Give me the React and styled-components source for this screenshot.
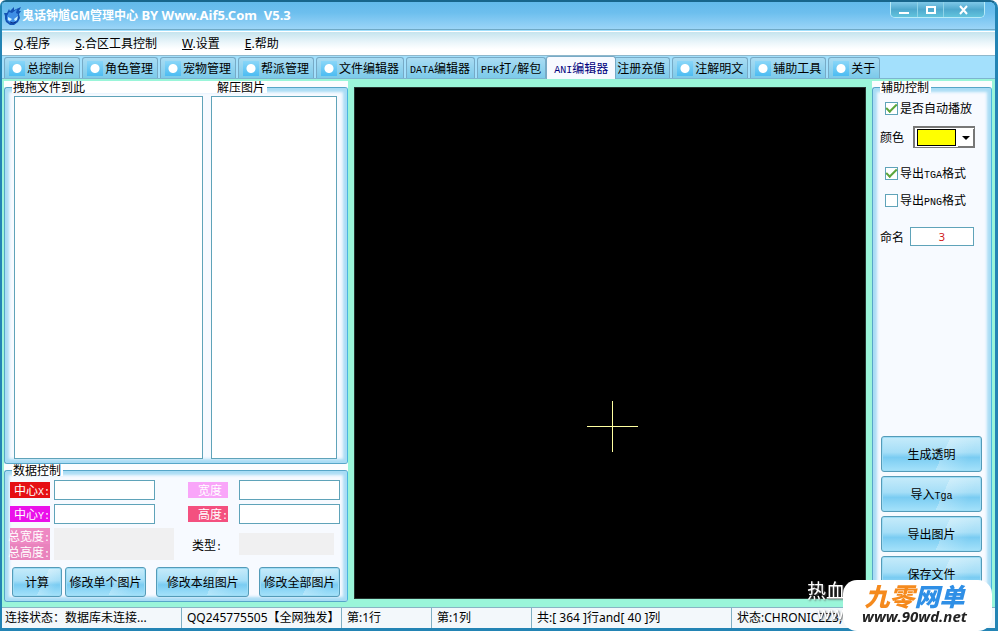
import React, { useState } from 'react'
import styled, { createGlobalStyle } from 'styled-components'

const textFont = `"Noto Sans CJK SC", sans-serif`
const uiFont = `"Noto Sans", "Noto Sans CJK SC", sans-serif`
const line = '#5fa3b9'

const tabs = [
  { name: '总控制台', icon: true },
  { name: '角色管理', icon: true },
  { name: '宠物管理', icon: true },
  { name: '帮派管理', icon: true },
  { name: '文件编辑器', icon: true },
  { latin: 'DATA', name: '编辑器' },
  { latin: 'PFK', name: '打', slash: true, rest: '解包' },
  { latin: 'ANI', name: '编辑器' },
  { name: '注册充值' },
  { name: '注解明文', icon: true },
  { name: '辅助工具', icon: true },
  { name: '关于', icon: true },
]

const menus = [
  ['Q', '程序'],
  ['S', '合区工具控制'],
  ['W', '设置'],
  ['E', '帮助'],
]

const Flame = () => (
  <svg width="18" height="20" viewBox="0 0 18 20" aria-hidden="true">
    <path
      d="M1 10 0 7l3 0 2-4 1 2 4-4 0 3 7-3-2 4 2 0-2 3 1 4-2 4-4 3H6l-4-3-1-3z"
      fill="#1453b4"
    />
    <path d="M3 10l2-4 3 1 5-4-1 4 2 1-1 6-3 3H6l-3-3z" fill="#3f8fe6" />
    <path d="M4 11l4 2-2 2-2-1zM10 13l4-3-1 4-2 1z" fill="#c9f1ff" />
    <path d="M6 16l3 1 3-1" stroke="#0b2f86" fill="none" />
  </svg>
)

const App = () => {
  const [active, setActive] = useState(7)

  return (
    <Window>
      <GlobalStyle />
      <TitleBar>
        <Flame />
        <Title>
          鬼话钟馗GM管理中心<span> BY Www.Aif5.Com&nbsp; V5.3</span>
        </Title>
        <Controls>
          <Control aria-label="最小化" $width={26}>
            <svg width="12" height="10" viewBox="0 0 12 10">
              <path d="M1 7h10v2H1z" fill="#fff" />
            </svg>
          </Control>
          <Control aria-label="最大化" $width={26}>
            <svg width="12" height="10" viewBox="0 0 12 10">
              <path d="M2 2h8v6H2z" fill="none" stroke="#fff" strokeWidth="2" />
            </svg>
          </Control>
          <Control aria-label="关闭" $width={41}>
            <svg width="12" height="10" viewBox="0 0 12 10">
              <path d="M2 1l7 8M9 1L2 9" stroke="#fff" strokeWidth="2" />
            </svg>
          </Control>
        </Controls>
      </TitleBar>
      <MenuBar>
        {menus.map(([key, label]) => (
          <MenuItem key={key}>
            <u>{key}</u>.{label}
          </MenuItem>
        ))}
      </MenuBar>
      <TabBar role="tablist">
        {tabs.map((tab, i) => (
          <Tab
            key={tab.name + i}
            role="tab"
            aria-selected={i === active}
            $active={i === active}
            $icon={tab.icon}
            onClick={() => setActive(i)}
          >
            {tab.icon && <Dot />}
            <span>
              {tab.latin && <Latin>{tab.latin}</Latin>}
              {tab.name}
              {tab.slash && <Latin>/</Latin>}
              {tab.rest}
            </span>
          </Tab>
        ))}
      </TabBar>
      <Workspace>
        <Column>
          <Group $grow>
            <FileLegend>
              <span>拽拖文件到此</span>
              <span>解压图片</span>
            </FileLegend>
            <Lists>
              <FileList multiple aria-label="拽拖文件到此" $size={190} />
              <FileList multiple aria-label="解压图片" $size={126} />
            </Lists>
          </Group>
          <Group>
            <Legend>数据控制</Legend>
            <DataFields>
              <FieldColumn $gap={4}>
                <Tag htmlFor="cx" $color="#e60f14">
                  <span>
                    中心<Latin>X:</Latin>
                  </span>
                </Tag>
                <Field id="cx" />
                <Tag htmlFor="cy" $color="#ea10ea">
                  <span>
                    中心<Latin>Y:</Latin>
                  </span>
                </Tag>
                <Field id="cy" />
                <Totals>
                  <Tag as="span" $color="#ee88c3">
                    <span>
                      总宽度<Latin>:</Latin>
                    </span>
                  </Tag>
                  <Readout />
                  <Tag as="span" $color="#e983bd">
                    <span>
                      总高度<Latin>:</Latin>
                    </span>
                  </Tag>
                  <Readout />
                </Totals>
              </FieldColumn>
              <FieldColumn $gap={11}>
                <Tag htmlFor="w" $color="#f9a5f9">
                  <span>
                    宽度<Latin>&nbsp;</Latin>
                  </span>
                </Tag>
                <Field id="w" />
                <Tag htmlFor="h" $color="#f4507f">
                  <span>
                    高度<Latin>:</Latin>
                  </span>
                </Tag>
                <Field id="h" />
                <Kind>
                  类型<Latin>:</Latin>
                </Kind>
                <Readout $wide />
              </FieldColumn>
            </DataFields>
            <DataButtons>
              <ButtonPair>
                <Glass $grow={50}>计算</Glass>
                <Glass $grow={83}>修改单个图片</Glass>
              </ButtonPair>
              <Glass $grow={92}>修改本组图片</Glass>
              <Glass $grow={80}>修改全部图片</Glass>
            </DataButtons>
          </Group>
        </Column>
        <Canvas>
          <Cross width="51" height="51" viewBox="0 0 51 51">
            <path d="M0 25.5h51M25.5 0v51" stroke="#ffffa0" />
          </Cross>
        </Canvas>
        <Column>
          <Group $grow>
            <Legend>辅助控制</Legend>
            <Options>
              <Check>
                <input type="checkbox" defaultChecked />
                <span>是否自动播放</span>
              </Check>
              <ColorRow>
                <label htmlFor="color">颜色</label>
                <ColorSelect>
                  <select id="color" defaultValue="yellow">
                    <option value="yellow"></option>
                  </select>
                  <Swatch />
                  <Arrow>
                    <svg width="8" height="4" viewBox="0 0 8 4">
                      <path d="M0 0h8L4 4z" fill="#000" />
                    </svg>
                  </Arrow>
                </ColorSelect>
              </ColorRow>
              <Check>
                <input type="checkbox" defaultChecked />
                <span>
                  导出<Latin>TGA</Latin>格式
                </span>
              </Check>
              <Check>
                <input type="checkbox" />
                <span>
                  导出<Latin>PNG</Latin>格式
                </span>
              </Check>
              <NameRow>
                <label htmlFor="name">命名</label>
                <NameInput id="name" defaultValue="3" />
              </NameRow>
            </Options>
            <Actions>
              <Glass $tall>生成透明</Glass>
              <Glass $tall>
                导入<Latin>Tga</Latin>
              </Glass>
              <Glass $tall>导出图片</Glass>
              <Glass $tall>保存文件</Glass>
            </Actions>
          </Group>
        </Column>
      </Workspace>
      <StatusBar>
        <Pane $width={177}>连接状态：数据库未连接...</Pane>
        <Pane $width={160}>QQ245775505【全网独发】</Pane>
        <Pane $width={90}>第:1行</Pane>
        <Pane $width={100}>第:1列</Pane>
        <Pane $width={200}>共:[ 364 ]行and[ 40 ]列</Pane>
        <Pane>状态:CHRONICZZ3,</Pane>
      </StatusBar>
      <Watermark>
        <Ghost>
          <span>热血</span>
          <small>www.</small>
        </Ghost>
        <Brand>
          <BrandName>
            九零<span>网单</span>
          </BrandName>
          <BrandUrl>www.90wd.net</BrandUrl>
        </Brand>
      </Watermark>
    </Window>
  )
}
export default App

const GlobalStyle = createGlobalStyle`
  * {
    box-sizing: border-box;
  }
  body {
    margin: 0;
    font: 12px/16px ${textFont};
    color: #000;
  }
  button,
  input,
  select {
    font: inherit;
    color: inherit;
    margin: 0;
    padding: 0;
  }
`

const Window = styled.div`
  min-height: 100vh;
  display: flex;
  flex-direction: column;
  border: solid #2384b4;
  border-width: 2px 3px 3px 2px;
  border-top-color: #17658b;
  border-radius: 6px 8px 0 0;
  background: #a3e0fc;
  overflow: hidden;
`

const TitleBar = styled.header`
  display: flex;
  align-items: center;
  height: 28px;
  padding: 0 10px 0 2px;
  background: linear-gradient(#62b9ea, #6dbfee 40%, #9bd5f7);
  border-bottom: 1px solid #6fa9c6;
`

const Title = styled.h1`
  flex: 1;
  margin: 0;
  font: bold 12px/20px ${uiFont};
  color: #fff;
  white-space: nowrap;
  span {
    font-size: 13px;
  }
`

const Controls = styled.div`
  display: flex;
  align-self: flex-start;
  height: 16px;
  border: 1px solid #b6ebf8;
  border-top: 0;
  border-radius: 0 0 5px 5px;
  overflow: hidden;
`

const Control = styled.button`
  display: flex;
  align-items: center;
  justify-content: center;
  width: ${({ $width }) => $width}px;
  border: 0;
  border-left: 1px solid #8fd3e8;
  background: linear-gradient(#7fc8e8, #4fa9ce 50%, #62c4dd);
  &:first-child {
    border-left: 0;
  }
`

const MenuBar = styled.nav`
  display: flex;
  align-items: center;
  gap: 25px;
  height: 25px;
  margin-top: 1px;
  padding: 0 12px;
  border-top: 1px solid #fff;
  border-bottom: 1px solid #8fb8cc;
  background: linear-gradient(#c5e4ee, #eef7fb 50%, #fff 75%);
  font: 12px/20px ${uiFont};
`

const MenuItem = styled.button`
  border: 0;
  background: none;
`

const TabBar = styled.div`
  display: flex;
  align-items: flex-end;
  gap: 2px;
  height: 23px;
  padding-left: 2px;
  border-bottom: 1px solid #7db5cf;
`

const Tab = styled.button`
  display: flex;
  align-items: center;
  gap: 2px;
  height: 21px;
  padding: 0 4px 0 ${({ $icon }) => ($icon ? 4 : 3)}px;
  border: 1px solid #77aac6;
  border-bottom: 0;
  border-radius: 3px 3px 0 0;
  background: linear-gradient(#a9dcf3, #7ccaea);
  white-space: nowrap;
  ${({ $active }) =>
    $active &&
    `
    position: relative;
    height: 23px;
    margin: 0 -5px -1px -2px;
    padding: 0 7px;
    background: #f7faff;
    color: #00007c;
  `}
`

const Dot = styled.i`
  width: 16px;
  height: 15px;
  background: radial-gradient(circle, #fff 0 4px, transparent 5px),
    linear-gradient(#8ad6f8, #4dbcf2);
`

const Latin = styled.span`
  font-family: 'Liberation Mono', monospace;
  font-size: 10px;
  line-height: 10px;
`

const Workspace = styled.main`
  flex: 1;
  display: grid;
  grid-template-columns: 344px 1fr 120px;
  gap: 6px;
  padding: 2px 3px 5px 2px;
  background: #9af5d9;
`

const Column = styled.div`
  display: flex;
  flex-direction: column;
  border-radius: 0 0 4px 4px;
  background: #fbfdff;
`

const Group = styled.fieldset`
  display: flex;
  flex-direction: column;
  flex: ${({ $grow }) => ($grow ? 1 : 'none')};
  min-width: 0;
  margin: 0;
  padding: 3px 7px 4px 5px;
  border: 1px solid #56a6c8;
  border-radius: 3px;
  background: #f7faff;
  box-shadow: inset 0 0 3px 4px #a8dcf5;
  border-right-color: #4bb5e0;
`

const Legend = styled.legend`
  margin-left: 2px;
  padding: 0 2px 0 1px;
  line-height: 12px;
  background: #fff;
`

const FileLegend = styled(Legend)`
  display: flex;
  gap: 132px;
`

const Lists = styled.div`
  flex: 1;
  display: flex;
  gap: 8px;
  padding: 0 3px 0 4px;
`

const FileList = styled.select`
  flex: ${({ $size }) => $size} 1 0;
  min-width: 0;
  appearance: none;
  border: 1px solid ${line};
  border-radius: 0;
  background: #fff;
`

const DataFields = styled.div`
  display: flex;
  justify-content: space-between;
  gap: 14px;
  padding-top: 1px;
`

const FieldColumn = styled.div`
  display: grid;
  grid-template-columns: 40px auto;
  grid-template-rows: 20px 20px 32px;
  align-items: center;
  gap: 4px ${({ $gap }) => $gap}px;
`

const Tag = styled.label`
  display: flex;
  align-items: center;
  justify-content: flex-end;
  height: 16px;
  background: ${({ $color }) => $color};
  color: #fff;
  white-space: nowrap;
`

const Field = styled.input`
  width: 101px;
  height: 20px;
  border: 1px solid ${line};
  background: #fff;
`

const Totals = styled.div`
  grid-column: 1 / 3;
  display: grid;
  grid-template-columns: 40px 120px;
  column-gap: 4px;
`

const Readout = styled.output`
  height: ${({ $wide }) => ($wide ? 22 : 16)}px;
  width: ${({ $wide }) => ($wide ? '95px' : 'auto')};
  background: #f0f0f1;
`

const Kind = styled.span`
  padding: 2px 0 0 4px;
  white-space: nowrap;
`

const DataButtons = styled.div`
  display: flex;
  gap: 10px;
  margin-top: 7px;
  padding-left: 2px;
`

const ButtonPair = styled.div`
  flex: 136 1 0;
  display: flex;
  gap: 3px;
`

const Glass = styled.button`
  flex: ${({ $grow }) => ($grow ? `${$grow} 1 0` : 'none')};
  height: ${({ $tall }) => ($tall ? 36 : 30)}px;
  border: 1px solid #549bb8;
  border-radius: 3px;
  background: linear-gradient(
      115deg,
      transparent 60%,
      rgba(255, 255, 255, 0.25) 60%,
      transparent 85%
    ),
    linear-gradient(#c6ebfa, #a5def7 45%, #7accf2 60%, #a5e2fa);
  box-shadow: inset 0 0 0 1px #9ddcf5;
  white-space: nowrap;
`

const Canvas = styled.section`
  display: flex;
  align-items: flex-end;
  justify-content: center;
  margin: 6px 0 3px;
  padding-bottom: 146px;
  border: 1px solid #23322e;
  background: #000;
`

const Cross = styled.svg`
  margin-left: 5px;
`

const Options = styled.div`
  display: flex;
  flex-direction: column;
  gap: 11px;
  padding: 4px 0 0 2px;
`

const Check = styled.label`
  display: flex;
  align-items: center;
  padding-left: 5px;
  white-space: nowrap;
  input {
    display: flex;
    align-items: center;
    justify-content: center;
    appearance: none;
    width: 13px;
    height: 13px;
    margin-right: 2px;
    border: 1px solid ${line};
    background: #fff;
  }
  input:checked::after {
    content: '';
    width: 9px;
    height: 4px;
    margin-bottom: 3px;
    border: solid #5da63c;
    border-width: 0 0 2px 2px;
    transform: rotate(-45deg);
  }
`

const ColorRow = styled.div`
  display: flex;
  align-items: center;
  justify-content: space-between;
  height: 22px;
  padding-right: 9px;
  margin: -1px 0 6px;
`

const ColorSelect = styled.div`
  position: relative;
  display: flex;
  gap: 2px;
  width: 62px;
  height: 22px;
  padding: 1px 0 0 2px;
  border: solid #777;
  border-width: 2px 1px 1px 2px;
  background: #fff;
  select {
    position: absolute;
    inset: 0;
    width: 100%;
    opacity: 0;
  }
`

const Swatch = styled.span`
  flex: 1;
  height: 17px;
  border: 1px solid #000;
  background: #ff0;
`

const Arrow = styled.span`
  display: flex;
  align-items: center;
  justify-content: center;
  width: 16px;
  border: solid #777;
  border-width: 0 1px 1px 0;
`

const NameRow = styled.div`
  display: flex;
  align-items: center;
  justify-content: space-between;
  margin-top: 8px;
  padding-right: 10px;
`

const NameInput = styled.input`
  width: 64px;
  height: 19px;
  border: 1px solid ${line};
  background: #fff;
  color: #d01818;
  font-family: ${uiFont};
  font-size: 11px;
  text-align: center;
`

const Actions = styled.div`
  display: flex;
  flex-direction: column;
  gap: 4px;
  margin-top: auto;
  padding: 0 2px 5px 3px;
`

const StatusBar = styled.footer`
  display: flex;
  height: 21px;
  border-top: 1px solid #87b4c4;
  background: #f3f8fb;
  font: 12px/19px ${uiFont};
`

const Pane = styled.span`
  flex: ${({ $width }) => ($width ? `0 1 ${$width}px` : 1)};
  min-width: 0;
  padding-left: 5px;
  border-right: 1px solid #7fb0c4;
  white-space: nowrap;
  overflow: hidden;
  &:first-child {
    flex-basis: 180px;
    padding-left: 3px;
  }
  &:last-child {
    border-right: 0;
  }
`

const Watermark = styled.aside`
  position: fixed;
  right: 6px;
  bottom: 0;
  display: flex;
  pointer-events: none;
`

const Ghost = styled.div`
  display: flex;
  flex-direction: column;
  width: 36px;
  color: #fff;
  white-space: nowrap;
  font: 19px/22px ${uiFont};
  text-shadow: 1px 1px 2px #555;
  small {
    padding-left: 10px;
    font-size: 17px;
  }
`

const Brand = styled.div`
  position: relative;
  width: 149px;
  height: 51px;
  padding: 3px 6px 0 0;
  border-radius: 14px;
  background: #fff;
  text-align: center;
`

const BrandName = styled.strong`
  display: block;
  font: italic 900 25px/25px ${textFont};
  color: #f58a1d;
  white-space: nowrap;
  span {
    color: #2f8fe6;
  }
`

const BrandUrl = styled.span`
  display: block;
  font: italic bold 15px/17px 'Open Sans', sans-serif;
  color: #222;
`
